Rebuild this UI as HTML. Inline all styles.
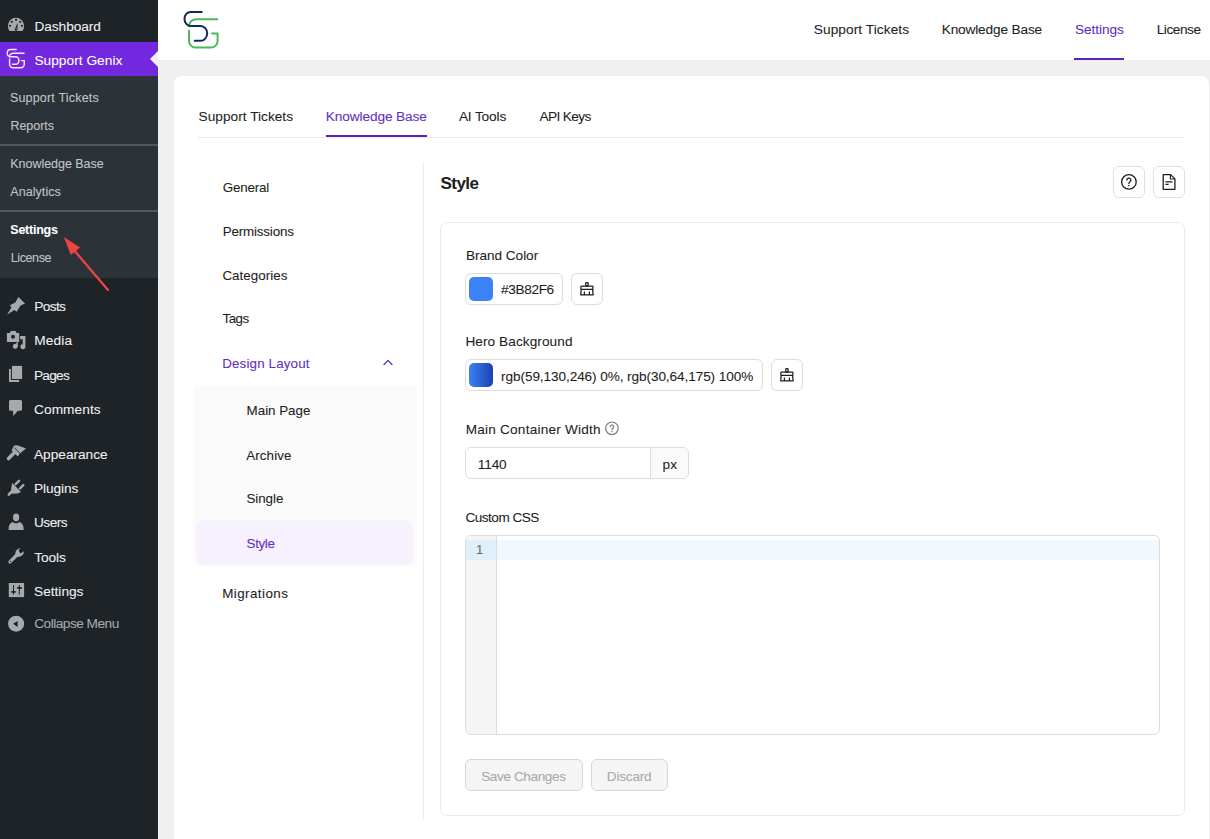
<!DOCTYPE html>
<html><head><meta charset="utf-8">
<style>
*{margin:0;padding:0;box-sizing:border-box}
html,body{width:1210px;height:839px;overflow:hidden;background:#f0f0f1;font-family:"Liberation Sans",sans-serif;color:#1e1e1e}
.a{position:absolute}
.t{position:absolute;line-height:1;white-space:nowrap;-webkit-text-stroke:0.08px currentColor}
#sb{position:absolute;left:0;top:0;width:158px;height:839px;background:#1d2327}
#sb .m{font-size:13.7px;color:#f0f0f1}
#sb .s{font-size:12.5px;color:#c3c4c7;left:10px}
#sb svg{position:absolute}
#hdr{position:absolute;left:158px;top:0;width:1052px;height:60px;background:#fff}
.nav{font-size:13.6px;color:#1e1e1e;top:22.5px}
#card{position:absolute;left:174px;top:76px;width:1036px;height:800px;background:#fff;border-radius:8px;border-right:1px solid #ececec}
.tab{font-size:13.7px;top:108.9px;color:#1e1e1e}
.ln{font-size:13.4px;color:#1e1e1e}
.lbl{font-size:13.6px;color:#1e1e1e;left:465.5px}
.box{position:absolute;border:1px solid #dcdcde;border-radius:6px;background:#fff}
</style></head><body>
<div id="sb">
  <!-- Dashboard -->
  <svg style="left:6px;top:15px" width="20" height="20" viewBox="0 0 20 20"><path fill="#a7aaad" d="M3.7 16 A8.15 8.15 0 1 1 16.3 16 Z"/><g fill="#1d2327"><circle cx="4" cy="10.8" r="1.1"/><circle cx="5.8" cy="6.8" r="1.1"/><circle cx="10.1" cy="4.9" r="1.1"/><circle cx="14.2" cy="6.8" r="1.1"/><circle cx="16" cy="10.8" r="1.1"/><path d="M9 13.2 L11.8 7.8 L11.4 13.6 A1.5 1.5 0 1 1 9 13.2Z"/></g><circle cx="10" cy="13.6" r="0.7" fill="#a7aaad"/></svg>
  <div class="a" style="left:0;top:42px;width:158px;height:34px;background:#7228dc"></div>
  <svg style="left:150px;top:51px" width="8" height="16" viewBox="0 0 8 16"><path d="M8 0 L0 8 L8 16Z" fill="#f0f0f1"/></svg>
  <svg style="left:6.04px;top:48.33px" width="19.5" height="21.03" viewBox="182 9 38 41"><g fill="none" stroke="#f8e6ff" stroke-width="2.8" stroke-linecap="round"><path d="M201.8,11.9 H190.5 A6,7 0 0 0 190.5,25.9 H200.6 A6.6,7.45 0 0 1 200.6,40.8 H194.7"/><path d="M217.3,19.3 H196 A7,7 0 0 0 189,26.3"/><path d="M189,30.6 V41 A6.6,6.6 0 0 0 195.6,47.6 H211 A6.6,6.6 0 0 0 217.6,41 V33.6 H212"/></g></svg>
  <div class="a" style="left:0;top:76px;width:158px;height:202px;background:#2c3338"></div>
  <div class="a" style="left:0;top:144px;width:158px;height:2px;background:#50575e"></div>
  <div class="a" style="left:0;top:210px;width:158px;height:2px;background:#50575e"></div>
  <!-- red arrow -->
  <svg style="left:0;top:0" width="158" height="300" viewBox="0 0 158 300"><path d="M108 290 L73 249" stroke="#ef4444" stroke-width="2.2" stroke-linecap="round"/><path d="M63.8 237.1 L80 247.5 L70.9 255Z" fill="#ef4444"/></svg>

<svg style="left:0;top:0" width="158" height="660" viewBox="0 0 158 660"><g fill="#a7aaad">
<g transform="translate(4,294)"><path d="M14.4,3 L21.1,9.5 L16.6,11.6 L12.6,17.8 L10.3,16 L3.1,20.8 L7.4,13.4 L5.9,11.2 L11.3,8.6 Z"/></g>
<g transform="translate(4,328)"><path fill-rule="evenodd" d="M2.9,5.1 H5.9 L6.6,3.2 Q6.8,2.9 7.2,2.9 H11.3 Q11.7,2.9 11.9,3.2 L12.4,5.1 H15.2 V13.9 H2.9 Z M9,6.8 A2,2 0 1 0 9,10.8 A2,2 0 1 0 9,6.8 Z"/><path d="M16.1,7.9 H21.4 V18.3 A2.5,2.5 0 1 1 18.7,16.2 V11.3 H16.1 Z"/><path d="M13.9,14.5 V18.3 A2.5,2.5 0 1 1 12.2,15.9 V14.5 Z"/></g>
<g transform="translate(4,363)"><path d="M5,5.9 H6.9 V17 H15.2 V18.9 H5 Z"/><rect x="7.9" y="2.9" width="10.2" height="13.1"/></g>
<g transform="translate(4,397)"><path d="M6.5,2.9 H16.5 Q18,2.9 18,4.4 V12.3 Q18,13.8 16.5,13.8 H13.9 L9.3,18.9 L9,13.8 H6.5 Q5,13.8 5,12.3 V4.4 Q5,2.9 6.5,2.9 Z"/></g>
<g transform="translate(4,441)"><path d="M9.6,5 Q11.5,3.6 14,4.6 L22,7.4 L15.6,12.8 L13.8,15.6 L7.6,9.6 Z"/><path d="M10.2,11.8 L4.6,17.6" stroke="#a7aaad" stroke-width="3.6" stroke-linecap="round"/><path d="M10.2,6.6 L16,12.3" stroke="#1d2327" stroke-width="0.9"/></g>
<g transform="translate(4,475)"><path d="M8.2,8.1 L16.9,16.7 Q15.5,18.3 13,18.6 L7.6,18.7 Q6.8,17 7.2,13 Z"/><path d="M7.2,17 L4.8,19.6" stroke="#a7aaad" stroke-width="2.6" stroke-linecap="round"/><path d="M11.6,9.2 L15,5.8 M15.9,13.5 L19.3,10.1" stroke="#a7aaad" stroke-width="2.4" stroke-linecap="round"/></g>
<g transform="translate(4,509)"><ellipse cx="12.1" cy="8.4" rx="3.1" ry="3.8"/><path d="M4.6,20.9 Q4.2,14.6 8.8,13 Q10.5,14.3 12.1,14.4 Q13.8,14.3 15.4,13 Q20,14.6 19.6,20.9 Z"/></g>
<g transform="translate(4,544)"><path d="M6,17.9 L12.6,11.3" stroke="#a7aaad" stroke-width="3.4" stroke-linecap="round"/><path d="M11.4,10.9 Q10.6,5.3 16.6,4 L14.7,6.6 L16.3,9.4 L19.9,7.3 Q19.9,12.6 13.6,12.9 Z"/><circle cx="6.6" cy="17.4" r="0.7" fill="#1d2327"/></g>
<g transform="translate(4,578)"><rect x="4.8" y="5" width="15.3" height="14.1"/><g fill="#1d2327"><rect x="9" y="7.1" width="1" height="9.6"/><rect x="7.3" y="13" width="4.3" height="1.8"/><rect x="14.8" y="7.1" width="1" height="9.6"/><rect x="13.2" y="9" width="4.6" height="1.8"/></g></g>
<g transform="translate(4,611)"><circle cx="12.1" cy="12.7" r="8"/><path d="M9,12.7 L13.6,9.9 V16.1 Z" fill="#1d2327"/></g>
</g></svg>
</div>

<div id="hdr">
</div>
<svg class="a" style="left:0;top:0" width="1210" height="60" viewBox="0 0 1210 60"><g fill="none" stroke-width="2" stroke-linecap="round"><path stroke="#4cb85a" d="M217.3,19.3 H196 A7,7 0 0 0 189,26.3"/><path stroke="#4cb85a" d="M189,30.6 V41 A6.6,6.6 0 0 0 195.6,47.6 H211 A6.6,6.6 0 0 0 217.6,41 V33.6 H212"/><path stroke="#13295b" d="M201.8,11.9 H190.5 A6,7 0 0 0 190.5,25.9 H200.6 A6.6,7.45 0 0 1 200.6,40.8 H194.7"/></g></svg>
<div class="a" style="left:1074px;top:58px;width:50px;height:2px;background:#5b22b8"></div>

<div id="card"></div>
<!-- tabs -->
<div class="a" style="left:198px;top:137px;width:986px;height:1px;background:#ebebeb"></div>
<div class="a" style="left:325.5px;top:135px;width:101.5px;height:2px;background:#5b22b8"></div>
<!-- left nav -->
<div class="a" style="left:423px;top:162px;width:1px;height:658px;background:#ececec"></div>
<svg class="a" style="left:382px;top:358px" width="12" height="9" viewBox="0 0 12 9"><path d="M2 6.5 L6 2.5 L10 6.5" fill="none" stroke="#6330c0" stroke-width="1.3" stroke-linecap="round" stroke-linejoin="round"/></svg>
<div class="a" style="left:194px;top:386px;width:222px;height:180px;background:#fafafa;border-radius:4px;box-shadow:0 0 3px rgba(0,0,0,0.03)"></div>
<div class="a" style="left:198px;top:522px;width:213px;height:41px;background:#f7f0ff;border-radius:6px;box-shadow:0 0 2px 1px rgba(190,150,255,0.12)"></div>
<!-- right panel -->
<div class="box" style="left:1113px;top:166px;width:32px;height:32px;border-color:#e0e0e0"></div>
<svg class="a" style="left:1120px;top:173px" width="18" height="18" viewBox="0 0 18 18"><circle cx="8.9" cy="8.9" r="7.3" fill="none" stroke="#1e1e1e" stroke-width="1.3"/><path d="M6.9 7.1 A2 2 0 1 1 9.9 8.8 C9.2 9.2 8.9 9.6 8.9 10.4" fill="none" stroke="#1e1e1e" stroke-width="1.3" stroke-linecap="round"/><circle cx="8.9" cy="12.6" r="0.8" fill="#1e1e1e"/></svg>
<div class="box" style="left:1153px;top:166px;width:32px;height:32px;border-color:#e0e0e0"></div>
<svg class="a" style="left:1160px;top:172px" width="18" height="20" viewBox="0 0 18 20"><path d="M3.2 2.6 H10.6 L14.9 6.9 V17.3 H3.2 Z" fill="none" stroke="#1e1e1e" stroke-width="1.3" stroke-linejoin="round"/><path d="M10.4 2.6 V7 H14.9" fill="none" stroke="#1e1e1e" stroke-width="1.1"/><path d="M5.4 9.9 H12.4 M5.4 12.4 H8.6" stroke="#1e1e1e" stroke-width="1.2"/></svg>
<div class="box" style="left:440px;top:222px;width:745px;height:594px;border-color:#ebebeb;border-radius:7px;background:#fff"></div>
<div class="box" style="left:465px;top:273px;width:98px;height:32px"></div>
<div class="a" style="left:469px;top:277px;width:24px;height:24px;border-radius:5px;background:#3b82f6"></div>
<div class="box" style="left:571px;top:273px;width:32px;height:32px"></div>
<svg class="a" style="left:579px;top:281px" width="16" height="16" viewBox="0 0 16 16"><g fill="none" stroke="#1e1e1e" stroke-width="1.25" stroke-linejoin="round"><rect x="6.8" y="1.7" width="2.3" height="3.5" rx="0.5"/><rect x="1.9" y="5.2" width="12" height="3.2" rx="0.5"/><path d="M2.2 8.4 L1.7 13.9 H14.1 L13.6 8.4"/><path d="M5.4 13.9 V10.6 M10.4 13.9 V10.6"/></g></svg>
<div class="box" style="left:465px;top:359px;width:298px;height:32px"></div>
<div class="a" style="left:469px;top:363px;width:24px;height:24px;border-radius:5px;background:linear-gradient(90deg,#3b82f6,#1e40af)"></div>
<div class="box" style="left:771px;top:359px;width:32px;height:32px"></div>
<svg class="a" style="left:779px;top:367px" width="16" height="16" viewBox="0 0 16 16"><g fill="none" stroke="#1e1e1e" stroke-width="1.25" stroke-linejoin="round"><rect x="6.8" y="1.7" width="2.3" height="3.5" rx="0.5"/><rect x="1.9" y="5.2" width="12" height="3.2" rx="0.5"/><path d="M2.2 8.4 L1.7 13.9 H14.1 L13.6 8.4"/><path d="M5.4 13.9 V10.6 M10.4 13.9 V10.6"/></g></svg>
<svg class="a" style="left:604px;top:420.5px" width="16" height="16" viewBox="0 0 16 16"><circle cx="7.9" cy="7.3" r="6.3" fill="none" stroke="#7a7a7a" stroke-width="1.15"/><path d="M6.2 5.6 A1.75 1.75 0 1 1 8.8 7.2 C8.1 7.6 7.9 8 7.9 8.8" fill="none" stroke="#7a7a7a" stroke-width="1.1" stroke-linecap="round"/><circle cx="7.9" cy="10.5" r="0.65" fill="#7a7a7a"/></svg>
<div class="box" style="left:465px;top:447px;width:224px;height:32px;overflow:hidden"><div class="a" style="left:184px;top:0;width:40px;height:32px;background:#fafafa;border-left:1px solid #dcdcde"></div></div>
<div class="box" style="left:465px;top:535px;width:695px;height:200px;overflow:hidden;border-radius:6px"><div class="a" style="left:0;top:0;width:31px;height:200px;background:#f5f5f5;border-right:1px solid #dcdcde"></div><div class="a" style="left:0;top:4px;width:30px;height:20px;background:#e0effc"></div><div class="a" style="left:31px;top:4px;width:670px;height:20px;background:#f1f8fe"></div></div>
<div class="box" style="left:465px;top:759px;width:118px;height:32px;background:#f5f5f5;border-color:#d6d6d6"></div>
<div class="box" style="left:591px;top:759px;width:77px;height:32px;background:#f5f5f5;border-color:#d6d6d6"></div>
<div class="t" style="left:34.40px;top:20px;font-size:13.70px;color:#f0f0f1;letter-spacing:-0.053px">Dashboard</div>
<div class="t" style="left:34.40px;top:54px;font-size:13.70px;color:#fff;letter-spacing:0.035px">Support Genix</div>
<div class="t" style="left:9.90px;top:92px;font-size:12.50px;color:#c3c4c7;letter-spacing:0.189px">Support Tickets</div>
<div class="t" style="left:10.40px;top:120px;font-size:12.50px;color:#c3c4c7;letter-spacing:-0.027px">Reports</div>
<div class="t" style="left:10.30px;top:158px;font-size:12.50px;color:#c3c4c7;letter-spacing:-0.032px">Knowledge Base</div>
<div class="t" style="left:10.30px;top:186px;font-size:12.50px;color:#c3c4c7;letter-spacing:0.061px">Analytics</div>
<div class="t" style="left:10.30px;top:224px;font-size:12.50px;color:#fff;letter-spacing:-0.245px;font-weight:bold">Settings</div>
<div class="t" style="left:10.70px;top:252px;font-size:12.50px;color:#c3c4c7;letter-spacing:-0.381px">License</div>
<div class="t" style="left:34.20px;top:300px;font-size:13.70px;color:#f0f0f1;letter-spacing:-0.616px">Posts</div>
<div class="t" style="left:34.20px;top:334px;font-size:13.70px;color:#f0f0f1;letter-spacing:0.142px">Media</div>
<div class="t" style="left:34.00px;top:369px;font-size:13.70px;color:#f0f0f1;letter-spacing:-0.760px">Pages</div>
<div class="t" style="left:34.00px;top:403px;font-size:13.70px;color:#f0f0f1;letter-spacing:0.066px">Comments</div>
<div class="t" style="left:34.00px;top:448px;font-size:13.70px;color:#f0f0f1;letter-spacing:-0.020px">Appearance</div>
<div class="t" style="left:34.00px;top:482px;font-size:13.70px;color:#f0f0f1;letter-spacing:-0.073px">Plugins</div>
<div class="t" style="left:34.00px;top:516px;font-size:13.70px;color:#f0f0f1;letter-spacing:-0.543px">Users</div>
<div class="t" style="left:34.20px;top:551px;font-size:13.70px;color:#f0f0f1;letter-spacing:-0.069px">Tools</div>
<div class="t" style="left:34.00px;top:585px;font-size:13.70px;color:#f0f0f1">Settings</div>
<div class="t" style="left:34.20px;top:617px;font-size:13.70px;color:#a7aaad;letter-spacing:-0.515px">Collapse Menu</div>
<div class="t" style="left:813.80px;top:23px;font-size:13.70px;color:#1e1e1e;letter-spacing:0.063px">Support Tickets</div>
<div class="t" style="left:941.70px;top:23px;font-size:13.70px;color:#1e1e1e;letter-spacing:-0.171px">Knowledge Base</div>
<div class="t" style="left:1074.90px;top:23px;font-size:13.70px;color:#6330c0;letter-spacing:-0.057px">Settings</div>
<div class="t" style="left:1156.70px;top:23px;font-size:13.70px;color:#1e1e1e;letter-spacing:-0.471px">License</div>
<div class="t" style="left:198.60px;top:110px;font-size:13.70px;color:#1e1e1e;letter-spacing:0.006px">Support Tickets</div>
<div class="t" style="left:325.80px;top:110px;font-size:13.70px;color:#6330c0;letter-spacing:-0.125px">Knowledge Base</div>
<div class="t" style="left:458.90px;top:110px;font-size:13.70px;color:#1e1e1e;letter-spacing:-0.155px">AI Tools</div>
<div class="t" style="left:539.40px;top:110px;font-size:13.70px;color:#1e1e1e;letter-spacing:-0.635px">API Keys</div>
<div class="t" style="left:222.70px;top:181px;font-size:13.40px;color:#1e1e1e;letter-spacing:-0.163px">General</div>
<div class="t" style="left:222.70px;top:225px;font-size:13.40px;color:#1e1e1e;letter-spacing:-0.168px">Permissions</div>
<div class="t" style="left:222.40px;top:269px;font-size:13.40px;color:#1e1e1e;letter-spacing:0.044px">Categories</div>
<div class="t" style="left:222.60px;top:312px;font-size:13.40px;color:#1e1e1e;letter-spacing:-0.600px">Tags</div>
<div class="t" style="left:222.20px;top:357px;font-size:13.40px;color:#6330c0;letter-spacing:0.144px">Design Layout</div>
<div class="t" style="left:246.60px;top:404px;font-size:13.40px;color:#1e1e1e;letter-spacing:-0.033px">Main Page</div>
<div class="t" style="left:246.20px;top:449px;font-size:13.40px;color:#1e1e1e;letter-spacing:0.102px">Archive</div>
<div class="t" style="left:246.40px;top:492px;font-size:13.40px;color:#1e1e1e;letter-spacing:-0.050px">Single</div>
<div class="t" style="left:246.60px;top:537px;font-size:13.40px;color:#6330c0;letter-spacing:-0.372px">Style</div>
<div class="t" style="left:222.20px;top:587px;font-size:13.40px;color:#1e1e1e;letter-spacing:0.432px">Migrations</div>
<div class="t" style="left:440.50px;top:175px;font-size:17.00px;color:#1e1e1e;letter-spacing:-0.558px;font-weight:bold">Style</div>
<div class="t" style="left:466.00px;top:249px;font-size:13.60px;color:#1e1e1e;letter-spacing:-0.037px">Brand Color</div>
<div class="t" style="left:501.00px;top:283px;font-size:13.60px;color:#1e1e1e;letter-spacing:-0.334px">#3B82F6</div>
<div class="t" style="left:465.40px;top:335px;font-size:13.60px;color:#1e1e1e;letter-spacing:0.090px">Hero Background</div>
<div class="t" style="left:501.10px;top:370px;font-size:13.60px;color:#1e1e1e;letter-spacing:-0.086px">rgb(59,130,246) 0%, rgb(30,64,175) 100%</div>
<div class="t" style="left:465.70px;top:423px;font-size:13.60px;color:#1e1e1e;letter-spacing:0.223px">Main Container Width</div>
<div class="t" style="left:477.70px;top:458px;font-size:13.60px;color:#1e1e1e;letter-spacing:-0.080px">1140</div>
<div class="t" style="left:662.60px;top:458px;font-size:13.60px;color:#1e1e1e;letter-spacing:0.138px">px</div>
<div class="t" style="left:465.50px;top:511px;font-size:13.60px;color:#1e1e1e;letter-spacing:-0.522px">Custom CSS</div>
<div class="t" style="left:476.00px;top:543px;font-size:13.00px;color:#6b6b6b">1</div>
<div class="t" style="left:481.20px;top:770px;font-size:13.60px;color:#a7aaad;letter-spacing:-0.401px">Save Changes</div>
<div class="t" style="left:606.80px;top:770px;font-size:13.60px;color:#a7aaad;letter-spacing:-0.201px">Discard</div>
</body></html>
